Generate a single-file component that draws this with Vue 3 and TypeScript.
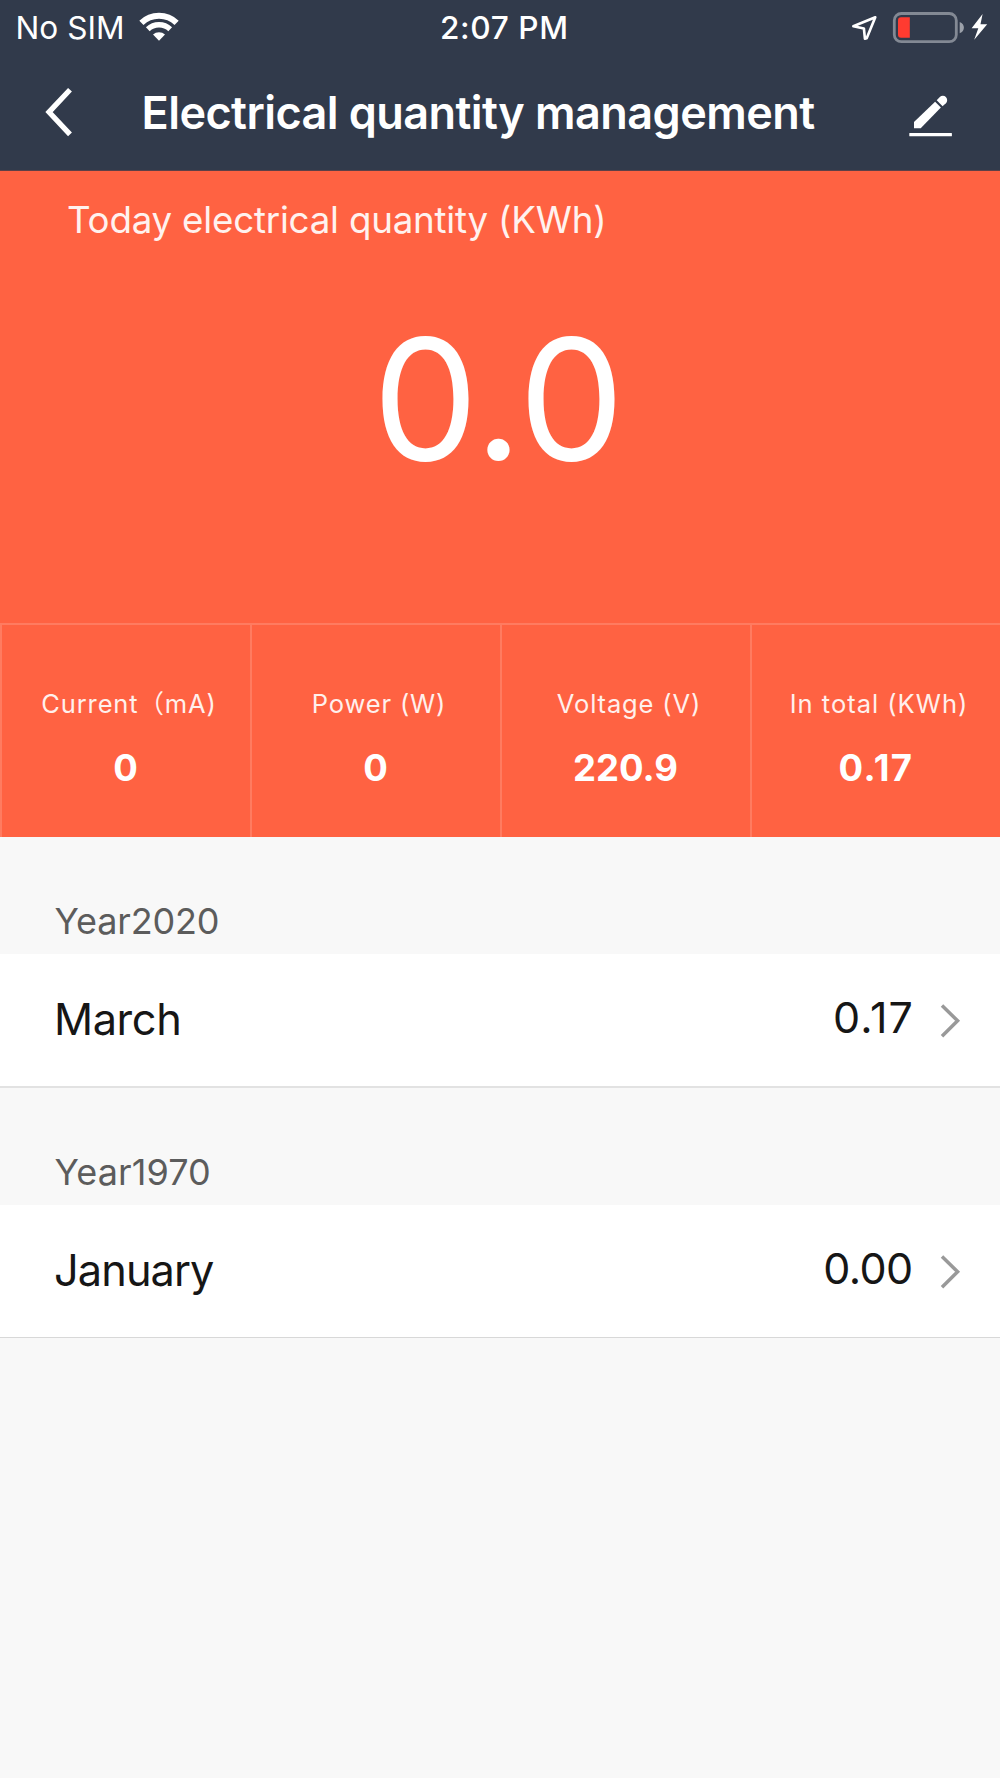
<script setup lang="ts">
interface Stat {
  key: string
  label: string
  value: string
}

interface YearGroup {
  year: number
  months: { name: string; total: string }[]
}

const stats: Stat[] = [
  { key: 'current', label: 'Current（mA)', value: '0' },
  { key: 'power', label: 'Power (W)', value: '0' },
  { key: 'voltage', label: 'Voltage (V)', value: '220.9' },
  { key: 'total', label: 'In total (KWh)', value: '0.17' },
]

const groups: YearGroup[] = [
  { year: 2020, months: [{ name: 'March', total: '0.17' }] },
  { year: 1970, months: [{ name: 'January', total: '0.00' }] },
]
</script>

<template>
  <div class="screen">
    <header class="top">
      <div class="status">
        <div class="carrier">
          <span>No SIM</span>
          <svg class="wifi" width="40" height="30" viewBox="0 0 40 30" fill="none">
            <path d="M2.400 10.800a25.400 25.400 0 0 1 35.200 0" stroke="#fff" stroke-width="6" />
            <path d="M8.800 17.200a16.200 16.200 0 0 1 22.400 0" stroke="#fff" stroke-width="5.400" />
            <path d="M14 22.600a8.800 8.800 0 0 1 12 0L20 28.800z" fill="#fff" />
          </svg>
        </div>
        <div class="clock">2:07 PM</div>
        <svg class="indicators" width="138" height="34" viewBox="850 10 138 34" fill="none">
          <path d="M875.300 17.200L853.300 26.300l10.600 2.200 1 10.200 1.800-.4z" stroke="#fff" stroke-width="2.600" stroke-linejoin="round" />
          <rect x="894.300" y="13.500" width="62" height="28.200" rx="7" stroke="#838994" stroke-width="2.800" />
          <path d="M901 17.300h8.800v20.400H901a3 3 0 0 1-3-3V20.300a3 3 0 0 1 3-3z" fill="#ff3b30" />
          <path d="M959.700 22c5.600 2 5.600 9.200 0 11.200z" fill="#9ca1aa" />
          <path d="M982.600 14L971.600 28.300h6.700L974.200 39.800 987.200 24.300h-6.700z" fill="#fff" />
        </svg>
      </div>
      <div class="nav">
        <svg class="back" width="30" height="50" viewBox="0 0 30 50" fill="none">
          <path d="M26 2.800L5 25.100l21 22.300" stroke="#fff" stroke-width="5.300" />
        </svg>
        <h1 class="title">Electrical quantity management</h1>
        <svg class="edit" width="44" height="42" viewBox="909 95 44 42">
          <path d="M914 128.300v-6.300L935.100 101.700l5.800 5.900-20.200 20.700z" fill="#fff" />
          <path d="M936.700 100.300l3.100-3.200a4.300 4.300 0 0 1 6.100 6.100l-3.300 3.100z" fill="#fff" />
          <rect x="909.300" y="133" width="42.600" height="3.300" rx=".5" fill="#fff" />
        </svg>
      </div>
    </header>

    <section class="hero">
      <div class="hero-label">Today electrical quantity (KWh)</div>
      <div class="hero-value">0.0</div>
    </section>

    <section class="stats">
      <div v-for="s in stats" :key="s.key" class="stat" :class="s.key">
        <div class="stat-label">{{ s.label }}</div>
        <div class="stat-value">{{ s.value }}</div>
      </div>
    </section>

    <section v-for="g in groups" :key="g.year" class="group" :class="`y${g.year}`">
      <h2 class="year">Year{{ g.year }}</h2>
      <div v-for="m in g.months" :key="m.name" class="month">
        <span class="name">{{ m.name }}</span>
        <span class="amount">{{ m.total }}</span>
        <svg class="chevron" width="22" height="36" viewBox="0 0 22 36" fill="none">
          <path d="M2 2.500L17.600 17.800 2 33.200" stroke="#999" stroke-width="3.500" />
        </svg>
      </div>
    </section>
  </div>
</template>

<style>
body {
  margin: 0;
  background: #f8f8f8;
}
</style>

<style scoped>
.screen {
  width: 1000px;
  min-height: 1778px;
  background: #f8f8f8;
  font-family: Inter, 'Noto Sans CJK SC', sans-serif;
  overflow: hidden;
}
svg {
  display: block;
  flex: none;
}
.top {
  box-sizing: border-box;
  height: 171px;
  background: #313a4b;
  border-bottom: 1px solid #5f4047;
  color: #fff;
}
.status {
  display: grid;
  grid-template-columns: 440px 1fr auto;
  height: 55px;
  font-size: 31.6px;
  line-height: 55px;
}
.carrier {
  display: flex;
  padding-left: 15.5px;
}
.wifi {
  margin: 12px 0 0 14.6px;
}
.clock {
  font-weight: 500;
  letter-spacing: 0.6px;
}
.indicators {
  margin: 10px 12px 0 0;
}
.nav {
  display: flex;
  height: 115px;
}
.back {
  margin: 32px 0 0 44px;
}
.title {
  flex: 1;
  margin: 0 0 0 67.5px;
  font-size: 45px;
  font-weight: 600;
  line-height: 115px;
  letter-spacing: -0.56px;
  white-space: nowrap;
}
.edit {
  margin: 40px 47px 0 0;
}
.hero {
  height: 452px;
  background: #ff6242;
  color: #fff;
}
.hero-label {
  padding-left: 67px;
  font-size: 36.7px;
  line-height: 98px;
  letter-spacing: -0.2px;
  color: #fff2ef;
}
.hero-value {
  padding-right: 3px;
  text-align: center;
  font-size: 168px;
  line-height: 260px;
}
.stats {
  display: grid;
  grid-template-columns: repeat(4, 250px);
  height: 214px;
  background: #ff6242;
  color: #fff;
}
.stat {
  box-sizing: border-box;
  padding-top: 64px;
  border-top: 2px solid #ff7b60;
  border-left: 2px solid #ff7b60;
  text-align: center;
}
.stat-label {
  padding-left: 6px;
  font-size: 25.5px;
  line-height: 30px;
  letter-spacing: 0.86px;
  color: #fff0ec;
  white-space: nowrap;
}
.total .stat-label {
  letter-spacing: 1px;
}
.stat-value {
  margin-top: 27px;
  padding-right: 1px;
  font-size: 36.5px;
  font-weight: 700;
  line-height: 44px;
}
.total .stat-value {
  padding-right: 0;
  letter-spacing: 1.4px;
}
.year {
  margin: 0;
  padding: 62px 0 10px 54.5px;
  font-size: 36px;
  font-weight: 400;
  line-height: 45px;
  letter-spacing: -0.15px;
  color: #5c5c5c;
}
.y1970 .year {
  letter-spacing: 0.1px;
}
.month {
  display: flex;
  height: 132px;
  padding: 0 38px 0 54px;
  background: #fff;
  border-bottom: 2px solid #e2e2e2;
  color: #161616;
}
.y1970 .month {
  border-bottom-width: 1px;
  border-bottom-color: #d8d8d8;
}
.name {
  flex: 1;
  font-size: 43.3px;
  line-height: 131px;
  letter-spacing: -0.4px;
}
.y1970 .name {
  letter-spacing: -0.9px;
}
.amount {
  font-size: 43px;
  line-height: 126px;
  letter-spacing: 1.1px;
}
.y1970 .amount {
  letter-spacing: -0.6px;
}
.chevron {
  margin: 49px 0 0 26px;
}
.y1970 .chevron {
  margin-left: 27.5px;
}
</style>
